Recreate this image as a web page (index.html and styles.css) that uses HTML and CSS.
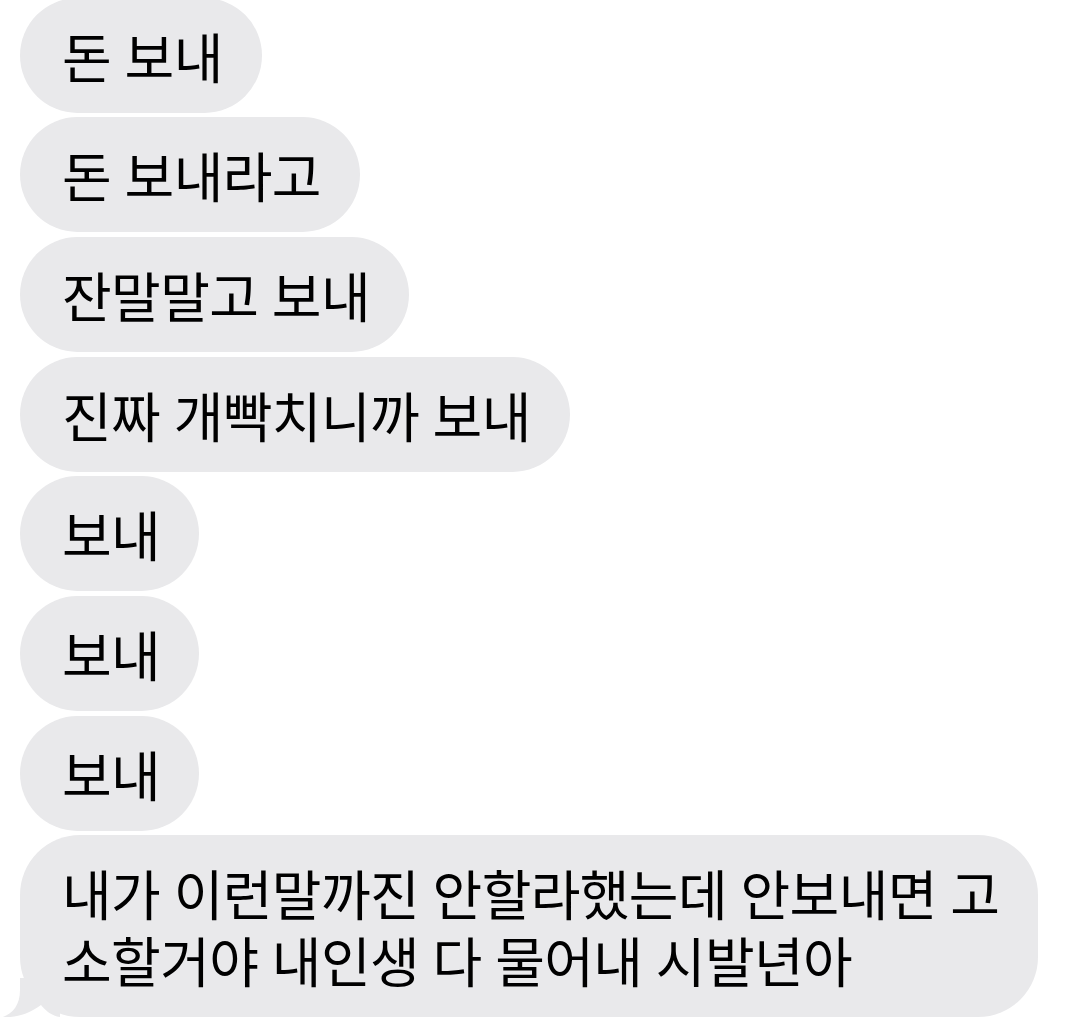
FILE: index.html
```html
<!DOCTYPE html>
<html>
<head>
<meta charset="utf-8">
<link rel="stylesheet" href="styles.css">
</head>
<body>
<div class="thread">
    <div class="bubble">돈 보내</div>
    <div class="bubble">돈 보내라고</div>
    <div class="bubble">잔말말고 보내</div>
    <div class="bubble">진짜 개빡치니까 보내</div>
    <div class="bubble">보내</div>
    <div class="bubble">보내</div>
    <div class="bubble">보내</div>
    <div class="bubble last">내가 이런말까진 안할라했는데 안보내면 고<br>소할거야 내인생 다 물어내 시발년아
        <svg class="tail" width="60" height="40" viewBox="0 0 60 40">
            <path d="M20 0 L20 12 C20 27 13 35 3 39 C15 40 29 36 41 27 C46 33 52 38 60 39 L60 0 Z" fill="#e9e9eb"/>
        </svg>
    </div>
</div>
</body>
</html>
```

FILE: styles.css
```css
body {
    margin: 0;
    background-color: #fff;
    font-family: "Noto Sans CJK KR", "Noto Sans", sans-serif;
    color: #000;
}

.thread {
    display: flex;
    flex-direction: column;
    align-items: flex-start;
    gap: 4.67px;
    padding-left: 20px;
    margin-top: -2.3px;
}

.bubble {
    position: relative;
    background-color: #e9e9eb;
    border-radius: 58px;
    padding: 24px 39px 24px 42px;
    font-size: 54px;
    line-height: 67px;
    letter-spacing: -0.6px;
    word-spacing: 2px;
}

.bubble.last {
    border-radius: 60px;
}

.tail {
    position: absolute;
    left: -20px;
    bottom: -1px;
}
```
